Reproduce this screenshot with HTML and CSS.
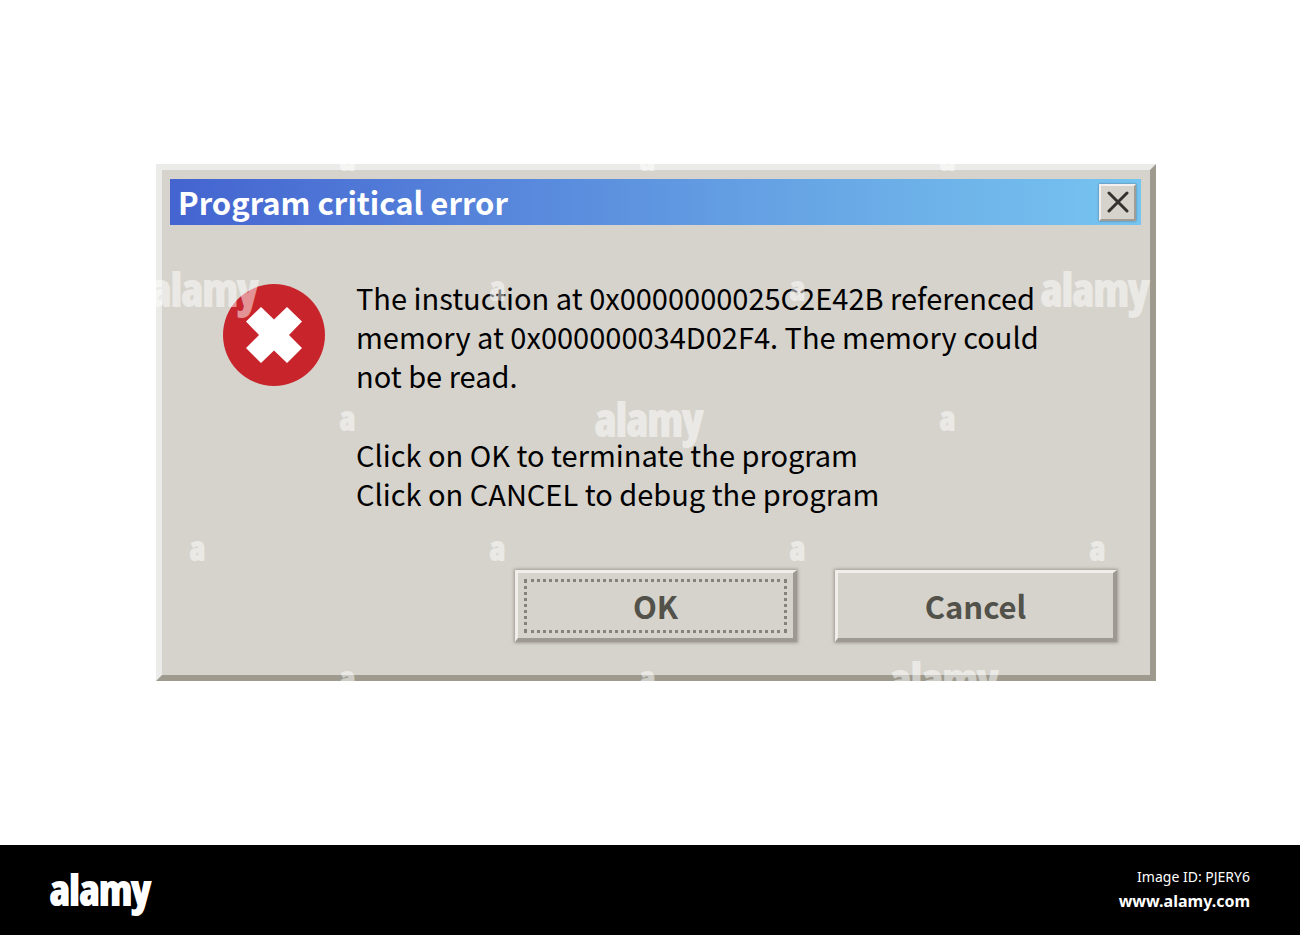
FILE: index.html
```html
<!DOCTYPE html>
<html lang="en">
<head>
<meta charset="utf-8">
<meta name="viewport" content="width=device-width, initial-scale=1">
<title>Program critical error</title>
<link rel="stylesheet" href="styles.css">
</head>
<body>
<main class="stage">
  <section class="dialog" role="alertdialog" aria-labelledby="dialog-title" aria-describedby="dialog-message">
    <header class="titlebar">
      <h1 class="title" id="dialog-title">Program critical error</h1>
      <button class="close" type="button" aria-label="Close">
        <svg class="close-icon" viewBox="0 0 22 22" aria-hidden="true"><path d="M2 2L20 20M20 2L2 20"/></svg>
      </button>
    </header>
    <div class="content">
      <svg class="error-icon" viewBox="0 0 102 102" aria-hidden="true">
        <circle cx="51" cy="51" r="51" fill="#c8242c"/>
        <path fill="#fff" d="M38 23L51 35.500L64 23L79 37.500L66 51L79 64L64 79L51 66.500L38 79L23 64L36 51L23 37.500Z"/>
      </svg>
      <div class="message" id="dialog-message">
        <p>The instuction at 0x0000000025C2E42B referenced memory at 0x000000034D02F4. The memory could not be read.</p>
        <p>Click on OK to terminate the program<br>Click on CANCEL to debug the program</p>
      </div>
    </div>
    <div class="actions">
      <button class="button button-default" type="button"><span class="focus-ring">OK</span></button>
      <button class="button" type="button">Cancel</button>
    </div>
    <svg class="watermark" viewBox="0 0 1000 517" aria-hidden="true">
      <g class="mark-large">
        <text x="-6" y="142">alamy</text>
        <text x="439" y="272">alamy</text>
        <text x="885" y="142">alamy</text>
        <text x="734" y="532">alamy</text>
      </g>
      <g class="mark-small">
        <text x="184" y="6">a</text>
        <text x="484" y="6">a</text>
        <text x="784" y="6">a</text>
        <text x="334" y="136">a</text>
        <text x="634" y="136">a</text>
        <text x="184" y="266">a</text>
        <text x="784" y="266">a</text>
        <text x="34" y="396">a</text>
        <text x="334" y="396">a</text>
        <text x="634" y="396">a</text>
        <text x="934" y="396">a</text>
        <text x="184" y="526">a</text>
        <text x="484" y="526">a</text>
      </g>
    </svg>
  </section>
</main>
<footer class="footer">
  <span class="brand">alamy</span>
  <div class="credit">
    <span>Image ID: PJERY6</span>
    <a class="site" href="https://www.alamy.com">www.alamy.com</a>
  </div>
</footer>
</body>
</html>
```

FILE: styles.css
```css
* {
  box-sizing: border-box;
}

body {
  display: flex;
  flex-direction: column;
  min-height: 100vh;
  margin: 0;
  background: #fff;
  font-family: "Noto Sans CJK SC", "Noto Sans", sans-serif;
}

.stage {
  display: flex;
  flex: 1;
  align-items: center;
  justify-content: center;
  padding: 24px 12px 24px 24px;
}

.dialog {
  position: relative;
  width: 100%;
  max-width: 1000px;
  padding: 9px 9px 33px 8px;
  border: 6px solid;
  border-color: #ebebe9 #9e9a8e #9e9a8e #ebebe9;
  background: #d6d3cc;
  color: #000;
}

.titlebar {
  display: flex;
  align-items: center;
  justify-content: space-between;
  min-height: 46px;
  padding: 0 5px 0 8px;
  background: linear-gradient(90deg, #4464d0, #5a8cdd 40%, #6cafe8 75%, #76c4f0);
}

.title {
  margin: 0;
  color: #fff;
  font-size: 31px;
  font-weight: 700;
  line-height: 46px;
}

.close {
  display: grid;
  place-items: center;
  width: 37px;
  height: 37px;
  padding: 0;
  border: 2px solid;
  border-color: #f1f0ee #a19d95 #a19d95 #f1f0ee;
  background: #d6d3cc;
  box-shadow: 0 0 2px #55708a;
}

.close-icon {
  width: 22px;
  height: 22px;
  fill: none;
  stroke: #33322f;
  stroke-width: 3;
  stroke-linecap: round;
}

.content {
  display: flex;
  gap: 31px;
  padding: 53px 24px 0 53px;
}

.error-icon {
  flex: none;
  width: 102px;
  height: 102px;
  margin-top: 6px;
}

.message {
  max-width: 700px;
  font-size: 29px;
  line-height: 39px;
}

.message p {
  margin: 0 0 40px;
}

.actions {
  display: flex;
  justify-content: flex-end;
  gap: 38px;
  padding: 17px 24px 0 0;
}

.button {
  width: 282px;
  height: 72px;
  padding: 6px;
  border: 4px solid;
  border-color: #efeeeb #9e9a92 #9e9a92 #efeeeb;
  border-width: 3px 4px 4px 3px;
  background: #d6d3cc;
  box-shadow: 0 0 3px 1px #9e9a92;
  color: #52514a;
  font-family: inherit;
  font-size: 31px;
  font-weight: 700;
  line-height: 48px;
}

.focus-ring {
  display: block;
  border: 3px dotted #85827b;
}

.watermark {
  position: absolute;
  inset: -6px;
  width: calc(100% + 12px);
  height: calc(100% + 12px);
  overflow: hidden;
  fill: #fff;
  stroke: #fff;
  stroke-width: 2px;
  opacity: 0.5;
  pointer-events: none;
}

.mark-large,
.mark-small,
.brand {
  font-family: "Open Sans Condensed", "Roboto Condensed", "Noto Sans ExtraCondensed", "Noto Sans CJK SC", sans-serif;
  font-weight: 900;
}

.mark-large {
  font-size: 45px;
}

.mark-small {
  font-size: 32px;
}

.footer {
  display: flex;
  align-items: center;
  justify-content: space-between;
  min-height: 90px;
  padding: 0 50px 2px;
  background: #000;
  color: #fff;
}

.brand {
  font-size: 42px;
  line-height: 60px;
  -webkit-text-stroke: 2px #fff;
}

.credit {
  display: flex;
  flex-direction: column;
  align-items: flex-end;
  font-family: "Noto Sans", sans-serif;
  font-size: 14px;
  line-height: 24px;
}

.site {
  color: inherit;
  font-size: 16px;
  font-weight: 700;
  text-decoration: none;
}
```
